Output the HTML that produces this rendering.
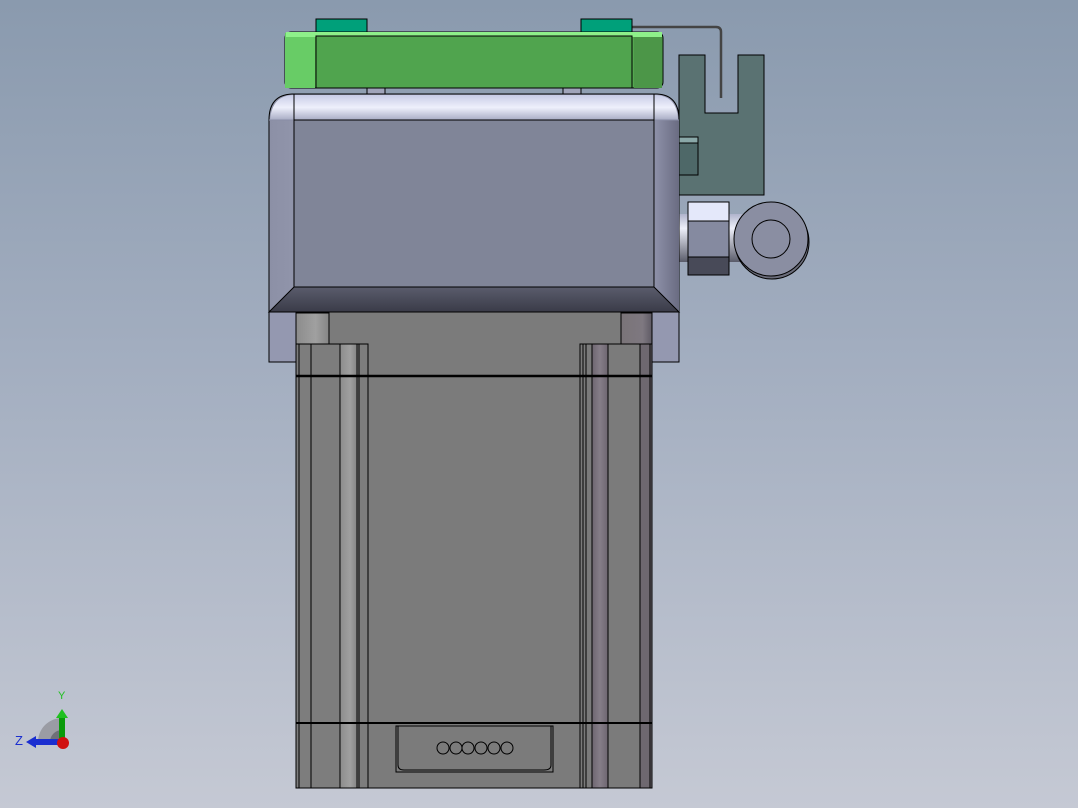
<!DOCTYPE html>
<html><head><meta charset="utf-8"><style>
html,body{margin:0;padding:0;width:1078px;height:808px;overflow:hidden}
body{background:linear-gradient(#8a9aae 0%,#a3aec0 45%,#c5c9d4 100%)}
svg{position:absolute;left:0;top:0}
</style></head><body>
<svg width="1078" height="808" viewBox="0 0 1078 808" xmlns="http://www.w3.org/2000/svg">
<defs>
<linearGradient id="hs" x1="0" x2="1"><stop offset="0" stop-color="#8c90a6"/><stop offset="0.4" stop-color="#a8acc2"/><stop offset="1" stop-color="#9498b0"/></linearGradient>
<linearGradient id="hsR" x1="0" x2="1"><stop offset="0" stop-color="#8d90a8"/><stop offset="1" stop-color="#6a6c82"/></linearGradient>
<linearGradient id="top" x1="0" y1="0" x2="0" y2="1"><stop offset="0" stop-color="#c8cce6"/><stop offset="0.5" stop-color="#eef0fc"/><stop offset="1" stop-color="#a8acc4"/></linearGradient>
<linearGradient id="bev" x1="0" y1="0" x2="0" y2="1"><stop offset="0" stop-color="#5a5c6c"/><stop offset="1" stop-color="#3a3b48"/></linearGradient>
<linearGradient id="gb" x1="0" y1="0" x2="0" y2="1"><stop offset="0" stop-color="#8ef08a"/><stop offset="1" stop-color="#54b052"/></linearGradient>
<linearGradient id="lc" x1="0" x2="1"><stop offset="0" stop-color="#8c8c8c"/><stop offset="0.6" stop-color="#a0a0a0"/><stop offset="1" stop-color="#858585"/></linearGradient>
<linearGradient id="rc" x1="0" x2="1"><stop offset="0" stop-color="#7a7478"/><stop offset="0.7" stop-color="#7e7880"/><stop offset="1" stop-color="#5e5a64"/></linearGradient>
<linearGradient id="rb" x1="0" x2="1"><stop offset="0" stop-color="#6e6670"/><stop offset="0.5" stop-color="#857d88"/><stop offset="1" stop-color="#6e6670"/></linearGradient>
<linearGradient id="sh" x1="0" y1="0" x2="0" y2="1"><stop offset="0" stop-color="#b0b4cc"/><stop offset="0.3" stop-color="#eef0fa"/><stop offset="1" stop-color="#5a5c6a"/></linearGradient>
</defs>
<g stroke="#000" stroke-width="1">
<!-- wire -->
<path d="M632 27 H716 Q721 27 721 32 V98" fill="none" stroke="#444" stroke-width="2.5"/>
<!-- bracket -->
<path d="M679 55 H705 V113 H738 V55 H764 V195 H679 Z" fill="#5a7272"/>
<rect x="679" y="137" width="19" height="38" fill="#4e6868"/>
<rect x="679" y="137" width="19" height="6" fill="#8aa8a8"/>
<!-- shaft -->
<rect x="676" y="214" width="86" height="48" fill="url(#sh)" stroke="none"/>
<!-- nut -->
<rect x="688" y="202" width="41" height="73" fill="#858aa0"/>
<rect x="688" y="202" width="41" height="19" fill="#e4e8fa"/>
<rect x="688" y="257" width="41" height="18" fill="#484a58"/>
<!-- disk -->
<circle cx="772" cy="242" r="37" fill="#6a6c7a"/>
<circle cx="771" cy="239" r="37" fill="#8a8ea2"/>
<circle cx="771" cy="239" r="19" fill="none"/>
<!-- green board -->
<rect x="316" y="19" width="51" height="14" fill="#00a07a"/>
<rect x="581" y="19" width="51" height="14" fill="#00a07a"/>
<rect x="285" y="32" width="378" height="56" rx="6" fill="#54a850"/>
<rect x="285" y="33" width="30" height="55" fill="#68cc66" stroke="none"/>
<rect x="634" y="33" width="28" height="55" fill="#4c9648" stroke="none"/>
<rect x="286" y="32" width="376" height="5" fill="#8ef08a" stroke="none"/>
<rect x="316" y="36" width="316" height="52" fill="#50a44e"/>
<!-- posts -->
<rect x="367" y="88" width="18" height="7" fill="#a0a4ba"/>
<rect x="563" y="88" width="18" height="7" fill="#a0a4ba"/>
<!-- motor body -->
<rect x="296" y="312" width="356" height="476" fill="#7b7b7b"/>
<rect x="296" y="313" width="33" height="32" fill="url(#lc)"/>
<rect x="621" y="313" width="31" height="32" fill="url(#rc)"/>
<!-- left strip -->
<rect x="296" y="344" width="72" height="444" fill="#7d7d7d"/>
<rect x="340" y="344" width="17" height="444" fill="url(#lc)"/>
<line x1="299" y1="344" x2="299" y2="788"/><line x1="311" y1="344" x2="311" y2="788"/>
<line x1="359" y1="344" x2="359" y2="788"/>
<!-- right strip -->
<rect x="580" y="344" width="72" height="444" fill="#7b7b7b"/>
<rect x="592" y="344" width="16" height="444" fill="url(#rb)"/>
<rect x="640" y="344" width="12" height="444" fill="#6e6870"/>
<line x1="583" y1="344" x2="583" y2="788"/><line x1="586" y1="344" x2="586" y2="788"/>
<line x1="608" y1="344" x2="608" y2="788"/><line x1="650" y1="344" x2="650" y2="788"/>
<line x1="296" y1="376" x2="652" y2="376" stroke-width="2.5"/>
<line x1="296" y1="723" x2="652" y2="723" stroke-width="2"/>
<!-- connector -->
<path d="M396 726 H553 V772 H396 Z" fill="#7b7b7b"/>
<path d="M398 726 V765 Q398 770 404 770 H544 Q551 770 551 765 V726" fill="none"/>
<g fill="none"><circle cx="443" cy="748" r="6"/><circle cx="456" cy="748" r="6"/><circle cx="468" cy="748" r="6"/><circle cx="481" cy="748" r="6"/><circle cx="494" cy="748" r="6"/><circle cx="507" cy="748" r="6"/></g>
<!-- flange sides -->
<rect x="269" y="312" width="27" height="50" fill="#9498b0"/>
<rect x="652" y="312" width="27" height="50" fill="#9498b0"/>
<!-- housing -->
<path d="M269 120 Q269 95 292 94 H657 Q679 95 679 120 V312 H269 Z" fill="url(#hs)"/>
<rect x="655" y="120" width="24" height="192" fill="url(#hsR)" stroke="none"/>
<path d="M270 120 Q272 95 294 95 H654 Q677 95 678 120 Z" fill="url(#top)" stroke="none"/>
<line x1="269" y1="120" x2="679" y2="120" stroke="#8a8ea6"/>
<line x1="294" y1="94" x2="294" y2="287"/><line x1="654" y1="94" x2="654" y2="287"/>
<rect x="294" y="120" width="360" height="167" fill="#808598"/>
<path d="M294 287 H654 L679 312 H269 Z" fill="url(#bev)"/>
</g>
<!-- triad -->
<g>
<path d="M38 742 A24 24 0 0 1 62 718 V742 Z" fill="#9a9ca4"/>
<path d="M50 742 A12 12 0 0 1 62 730 V742 Z" fill="#6e7078"/>
<rect x="59" y="717" width="6" height="25" fill="#0a9a0a"/>
<path d="M56 718 L62 709 L68 718 Z" fill="#20c020"/>
<rect x="34" y="739" width="26" height="6" fill="#1a2ed0"/>
<path d="M36 736 L26 742 L36 748 Z" fill="#1a2ed0"/>
<circle cx="63" cy="743" r="6" fill="#d01010"/>
<text x="58" y="699" font-family="Liberation Sans,sans-serif" font-size="11" fill="#20c020">Y</text>
<text x="15" y="745" font-family="Liberation Sans,sans-serif" font-size="13" fill="#1a2ed0">Z</text>
</g>
</svg>
</body></html>
